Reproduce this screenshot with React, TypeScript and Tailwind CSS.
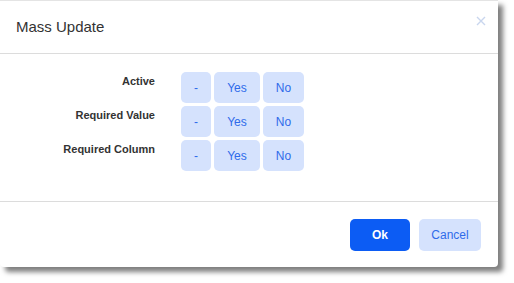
import React from 'react';

const rows = ['Active', 'Required Value', 'Required Column'];

const OptionButton: React.FC<{ label: string; width: string }> = ({ label, width }) => (
  <button className={`${width} h-[31px] rounded-[5px] bg-[#d5e2fd] text-[12px] text-[#2f6bea]`}>{label}</button>
);

const App: React.FC = () => {
  return (
    <div className="w-[514px] h-[283px] bg-white" style={{ fontFamily: '"Liberation Sans", Arial, sans-serif' }}>
      <div className="w-[498px] h-[267px] bg-white rounded-b-[4px] border-t border-[#e4e4e4] shadow-[5px_5px_5px_rgba(0,0,0,0.5)] flex flex-col">
        {/* header */}
        <div className="h-[53px] border-b border-[#dcdcdc] flex items-center justify-between pl-[16px] pr-[12px]">
          <span className="text-[15px] text-[#333333]">Mass Update</span>
          <svg width="10" height="10" viewBox="0 0 10 10" className="mb-[12px]">
            <path d="M1 1L9 9M9 1L1 9" stroke="#c9d6ee" strokeWidth="1.4" />
          </svg>
        </div>

        {/* body */}
        <div className="h-[148px] border-b border-[#dcdcdc] pt-[18px] flex flex-col gap-[3px]">
          {rows.map((r) => (
            <div key={r} className="flex items-start">
              <div className="w-[155px] pt-[1px] text-right text-[11px] leading-[16px] font-bold text-[#333333]">{r}</div>
              <div className="ml-[26px] flex gap-[3px]">
                <OptionButton label="-" width="w-[30px]" />
                <OptionButton label="Yes" width="w-[46px]" />
                <OptionButton label="No" width="w-[41px]" />
              </div>
            </div>
          ))}
        </div>

        {/* footer */}
        <div className="flex justify-end gap-[9px] pt-[17px] pr-[17px]">
          <button className="w-[60px] h-[32px] rounded-[5px] bg-[#0c5cf4] text-[12px] font-bold text-white">Ok</button>
          <button className="w-[62px] h-[32px] rounded-[5px] bg-[#d5e2fd] text-[12px] text-[#2f6bea]">Cancel</button>
        </div>
      </div>
    </div>
  );
};

export default App;
